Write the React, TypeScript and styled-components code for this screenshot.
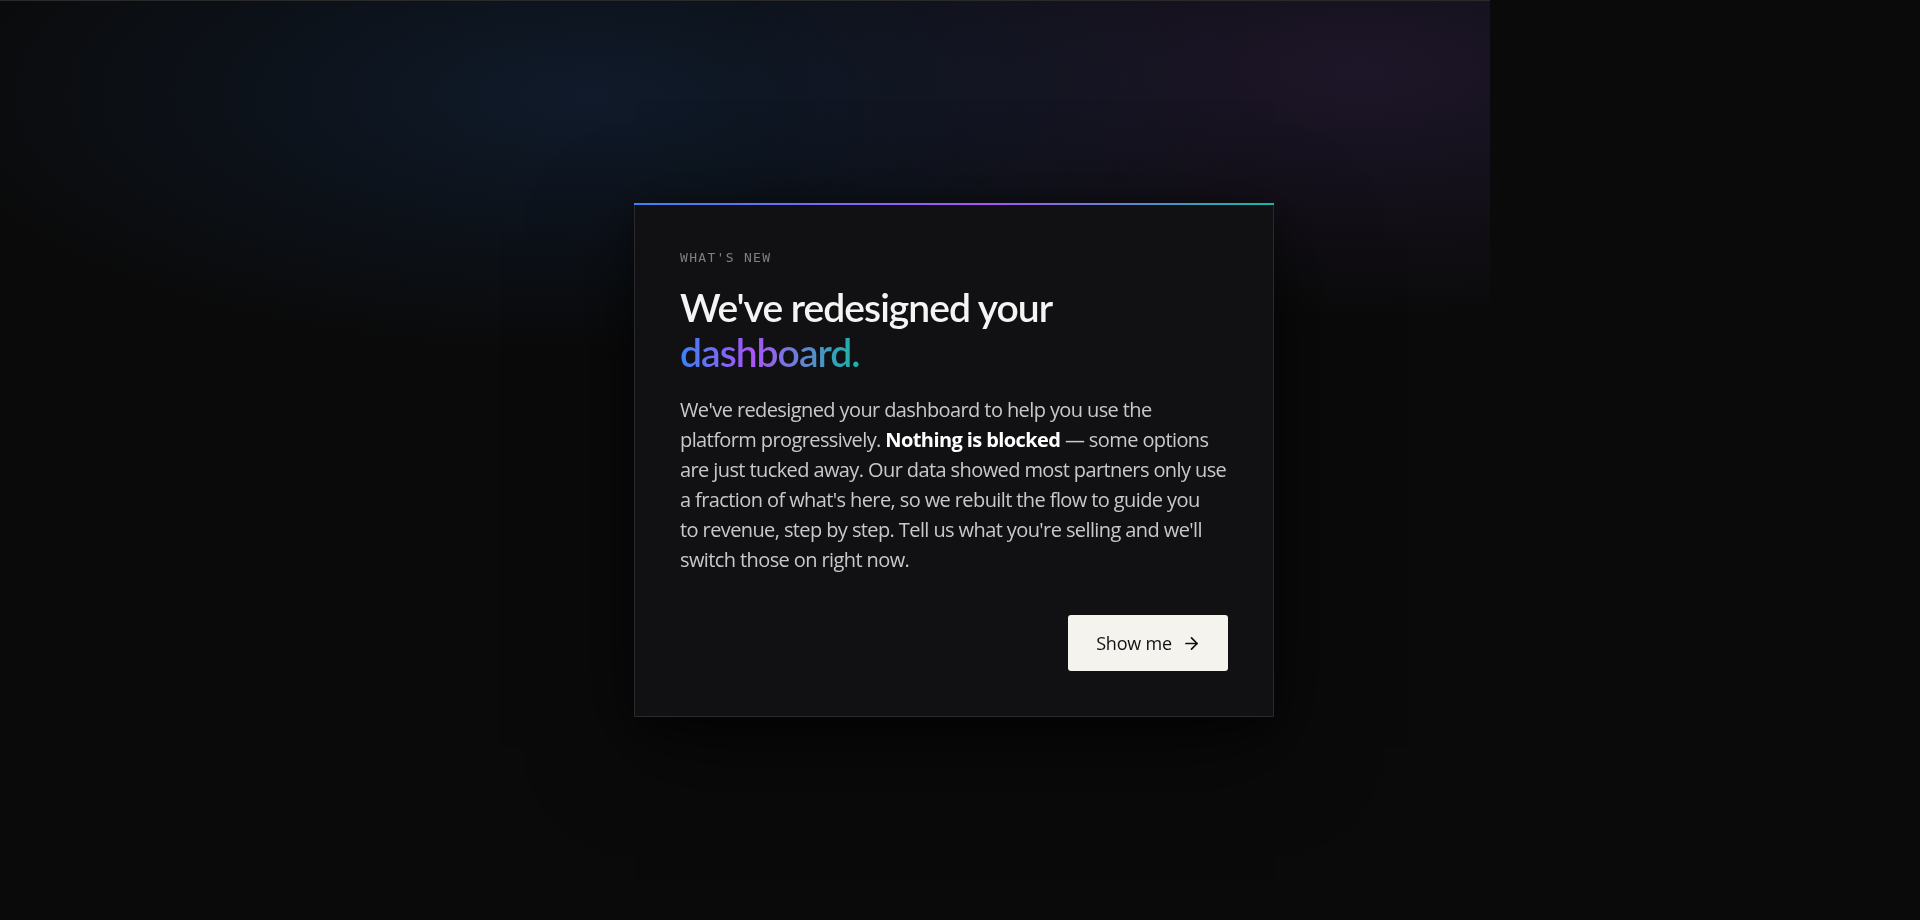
import React from "react";
import styled, { createGlobalStyle } from "styled-components";
import { ArrowRight } from "lucide-react";

const GlobalStyle = createGlobalStyle`
  *, *::before, *::after { box-sizing: border-box; }
  html, body {
    margin: 0;
    padding: 0;
    background: #0a0a0a;
  }
  body {
    font-family: "Segoe UI", "Open Sans", "Noto Sans", sans-serif;
    -webkit-font-smoothing: antialiased;
  }
`;

const Page = styled.main`
  position: relative;
  height: 100vh;
  min-height: 920px;
  display: flex;
  align-items: center;
  justify-content: center;
  padding-right: 12px;
`;

const Backdrop = styled.div`
  position: fixed;
  top: 0;
  left: 0;
  width: 1490px;
  height: 100%;
  border-top: 1px solid #2a2a2a;
  pointer-events: none;
  background:
    radial-gradient(ellipse 680px 260px at 590px 95px, rgba(22, 46, 82, 0.45), rgba(22, 46, 82, 0) 100%),
    radial-gradient(ellipse 640px 250px at 1360px 70px, rgba(48, 34, 72, 0.5), rgba(48, 34, 72, 0) 100%),
    #0a0a0a;
`;

const Card = styled.section`
  position: relative;
  z-index: 1;
  width: 640px;
  padding: 45px;
  background: #111113;
  border: 1px solid #2a2a2e;
  box-shadow: 0 30px 90px rgba(0, 0, 0, 0.6), 0 10px 30px rgba(0, 0, 0, 0.35);

  &::before {
    content: "";
    position: absolute;
    top: -1px;
    left: -1px;
    right: -1px;
    height: 2px;
    background: linear-gradient(90deg, #3b82f6 0%, #a855f7 55%, #14b8a6 100%);
  }
`;

const Eyebrow = styled.div`
  font-family: "DejaVu Sans Mono", "Liberation Mono", monospace;
  font-size: 13px;
  line-height: 17px;
  letter-spacing: 0.1em;
  color: #808083;
  text-transform: uppercase;
`;

const Title = styled.h1`
  margin: 19px 0 0;
  font-family: "Segoe UI", "Lato", "Open Sans", sans-serif;
  font-size: 39px;
  line-height: 45px;
  font-weight: 600;
  letter-spacing: -0.025em;
  color: #f4f4f5;
`;

const GradientWord = styled.span`
  display: inline-block;
  background: linear-gradient(90deg, #3b82f6 0%, #a855f7 40%, #14b8a6 100%);
  -webkit-background-clip: text;
  background-clip: text;
  color: transparent;
`;

const Body = styled.p`
  margin: 20px 0 0;
  font-size: 20px;
  line-height: 30px;
  letter-spacing: -0.03em;
  color: #c9c9cc;

  strong {
    font-weight: 700;
    color: #ffffff;
  }
`;

const Actions = styled.div`
  display: flex;
  justify-content: flex-end;
  margin-top: 40px;
`;

const PrimaryButton = styled.button`
  display: inline-flex;
  align-items: center;
  gap: 10px;
  height: 56px;
  padding: 0 27px 0 28px;
  border: none;
  border-radius: 3px;
  background: #f4f3ee;
  color: #111111;
  font-family: inherit;
  font-size: 18px;
  font-weight: 500;
  letter-spacing: -0.01em;
  cursor: pointer;

  svg {
    width: 19px;
    height: 19px;
  }
`;

export default function App() {
  return (
    <>
      <GlobalStyle />
      <Backdrop />
      <Page>
        <Card>
          <Eyebrow>What's new</Eyebrow>
          <Title>
            We've redesigned your
            <br />
            <GradientWord>dashboard.</GradientWord>
          </Title>
          <Body>
            We've redesigned your dashboard to help you use the
            <br />
            platform progressively. <strong>Nothing is blocked</strong> — some options
            <br />
            are just tucked away. Our data showed most partners only use
            <br />
            a fraction of what's here, so we rebuilt the flow to guide you
            <br />
            to revenue, step by step. Tell us what you're selling and we'll
            <br />
            switch those on right now.
          </Body>
          <Actions>
            <PrimaryButton>
              Show me
              <ArrowRight strokeWidth={2.2} />
            </PrimaryButton>
          </Actions>
        </Card>
      </Page>
    </>
  );
}
